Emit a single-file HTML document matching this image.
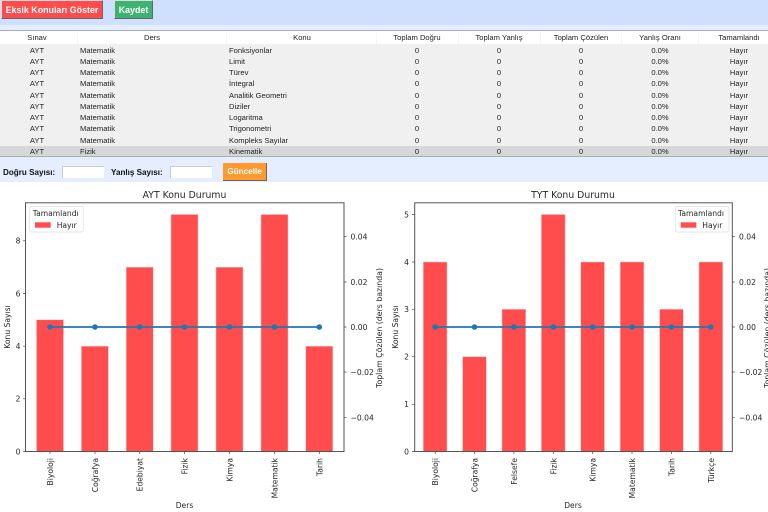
<!DOCTYPE html>
<html lang="tr"><head><meta charset="utf-8"><title>Konu Durumu</title>
<style>
html,body{margin:0;padding:0;width:768px;height:512px;overflow:hidden;background:#fff}
body{position:relative;font-family:"Liberation Sans",sans-serif}
.abs{position:absolute}
.btn{position:absolute;box-sizing:border-box;color:#fff;font-weight:bold;font-size:8.9px;text-align:center;border-right:1.5px solid #666;border-bottom:1.5px solid #666;border-top:1px solid #ddd;border-left:1px solid #ddd}
.th,.td{position:absolute;font-size:7.6px;color:#222;white-space:nowrap;line-height:11px}
.c{text-align:center;transform:translateX(-50%)}
.lbl{position:absolute;font-weight:bold;font-size:8.1px;color:#111;line-height:11px}
.inp{position:absolute;background:#fff;box-sizing:border-box;border-top:1px solid #ccc;border-left:1px solid #ccc;height:12px;top:166px;width:42px}
svg{position:absolute;left:0;top:0;filter:blur(.25px)}
svg text{font-family:"DejaVu Sans",sans-serif;fill:#262626}
</style></head><body>
<div class="abs" style="left:0;top:0;width:768px;height:25px;background:#cfe0ff"></div>
<div class="abs" style="left:0;top:25px;width:768px;height:5px;background:#e4eeff"></div>
<div class="btn" style="left:1px;top:0;width:102px;height:19px;background:#ff4d4d;line-height:18px;">Eksik Konuları Göster</div>
<div class="btn" style="left:114px;top:0;width:39px;height:19px;background:#3cb371;line-height:18px;">Kaydet</div>

<div class="abs" style="left:0;top:30px;width:768px;height:1px;background:#a9adb5"></div>
<div class="abs" style="left:0;top:31px;width:768px;height:13px;background:#fff"></div>
<div class="abs" style="left:77px;top:31px;width:1px;height:13px;background:#f5f5f5"></div>
<div class="abs" style="left:226px;top:31px;width:1px;height:13px;background:#f5f5f5"></div>
<div class="abs" style="left:376px;top:31px;width:1px;height:13px;background:#f5f5f5"></div>
<div class="abs" style="left:458px;top:31px;width:1px;height:13px;background:#f5f5f5"></div>
<div class="abs" style="left:540px;top:31px;width:1px;height:13px;background:#f5f5f5"></div>
<div class="abs" style="left:621px;top:31px;width:1px;height:13px;background:#f5f5f5"></div>
<div class="abs" style="left:698px;top:31px;width:1px;height:13px;background:#f5f5f5"></div>
<div class="abs" style="left:0;top:44px;width:768px;height:101.5px;background:#f0f0f0"></div>
<div class="abs" style="left:0;top:145.5px;width:768px;height:11px;background:#d7d7d7"></div>
<div class="abs" style="left:0;top:156px;width:768px;height:1px;background:#a9adb5"></div>
<div class="abs" style="left:0;top:157px;width:768px;height:25px;background:#e4eeff"></div>

<div class="th c" style="left:37px;top:32px">Sınav</div>
<div class="th c" style="left:152px;top:32px">Ders</div>
<div class="th c" style="left:302px;top:32px">Konu</div>
<div class="th c" style="left:417px;top:32px">Toplam Doğru</div>
<div class="th c" style="left:499px;top:32px">Toplam Yanlış</div>
<div class="th c" style="left:581px;top:32px">Toplam Çözülen</div>
<div class="th c" style="left:660px;top:32px">Yanlış Oranı</div>
<div class="th c" style="left:739px;top:32px">Tamamlandı</div>

<div class="td c" style="left:37px;top:45px">AYT</div><div class="td" style="left:80px;top:45px">Matematik</div><div class="td" style="left:229px;top:45px">Fonksiyonlar</div><div class="td c" style="left:417px;top:45px">0</div><div class="td c" style="left:499px;top:45px">0</div><div class="td c" style="left:581px;top:45px">0</div><div class="td c" style="left:660px;top:45px">0.0%</div><div class="td c" style="left:739px;top:45px">Hayır</div>
<div class="td c" style="left:37px;top:56px">AYT</div><div class="td" style="left:80px;top:56px">Matematik</div><div class="td" style="left:229px;top:56px">Limit</div><div class="td c" style="left:417px;top:56px">0</div><div class="td c" style="left:499px;top:56px">0</div><div class="td c" style="left:581px;top:56px">0</div><div class="td c" style="left:660px;top:56px">0.0%</div><div class="td c" style="left:739px;top:56px">Hayır</div>
<div class="td c" style="left:37px;top:67px">AYT</div><div class="td" style="left:80px;top:67px">Matematik</div><div class="td" style="left:229px;top:67px">Türev</div><div class="td c" style="left:417px;top:67px">0</div><div class="td c" style="left:499px;top:67px">0</div><div class="td c" style="left:581px;top:67px">0</div><div class="td c" style="left:660px;top:67px">0.0%</div><div class="td c" style="left:739px;top:67px">Hayır</div>
<div class="td c" style="left:37px;top:78px">AYT</div><div class="td" style="left:80px;top:78px">Matematik</div><div class="td" style="left:229px;top:78px">İntegral</div><div class="td c" style="left:417px;top:78px">0</div><div class="td c" style="left:499px;top:78px">0</div><div class="td c" style="left:581px;top:78px">0</div><div class="td c" style="left:660px;top:78px">0.0%</div><div class="td c" style="left:739px;top:78px">Hayır</div>
<div class="td c" style="left:37px;top:89.5px">AYT</div><div class="td" style="left:80px;top:89.5px">Matematik</div><div class="td" style="left:229px;top:89.5px">Analitik Geometri</div><div class="td c" style="left:417px;top:89.5px">0</div><div class="td c" style="left:499px;top:89.5px">0</div><div class="td c" style="left:581px;top:89.5px">0</div><div class="td c" style="left:660px;top:89.5px">0.0%</div><div class="td c" style="left:739px;top:89.5px">Hayır</div>
<div class="td c" style="left:37px;top:100.5px">AYT</div><div class="td" style="left:80px;top:100.5px">Matematik</div><div class="td" style="left:229px;top:100.5px">Diziler</div><div class="td c" style="left:417px;top:100.5px">0</div><div class="td c" style="left:499px;top:100.5px">0</div><div class="td c" style="left:581px;top:100.5px">0</div><div class="td c" style="left:660px;top:100.5px">0.0%</div><div class="td c" style="left:739px;top:100.5px">Hayır</div>
<div class="td c" style="left:37px;top:112px">AYT</div><div class="td" style="left:80px;top:112px">Matematik</div><div class="td" style="left:229px;top:112px">Logaritma</div><div class="td c" style="left:417px;top:112px">0</div><div class="td c" style="left:499px;top:112px">0</div><div class="td c" style="left:581px;top:112px">0</div><div class="td c" style="left:660px;top:112px">0.0%</div><div class="td c" style="left:739px;top:112px">Hayır</div>
<div class="td c" style="left:37px;top:123px">AYT</div><div class="td" style="left:80px;top:123px">Matematik</div><div class="td" style="left:229px;top:123px">Trigonometri</div><div class="td c" style="left:417px;top:123px">0</div><div class="td c" style="left:499px;top:123px">0</div><div class="td c" style="left:581px;top:123px">0</div><div class="td c" style="left:660px;top:123px">0.0%</div><div class="td c" style="left:739px;top:123px">Hayır</div>
<div class="td c" style="left:37px;top:134.5px">AYT</div><div class="td" style="left:80px;top:134.5px">Matematik</div><div class="td" style="left:229px;top:134.5px">Kompleks Sayılar</div><div class="td c" style="left:417px;top:134.5px">0</div><div class="td c" style="left:499px;top:134.5px">0</div><div class="td c" style="left:581px;top:134.5px">0</div><div class="td c" style="left:660px;top:134.5px">0.0%</div><div class="td c" style="left:739px;top:134.5px">Hayır</div>
<div class="td c" style="left:37px;top:145.5px">AYT</div><div class="td" style="left:80px;top:145.5px">Fizik</div><div class="td" style="left:229px;top:145.5px">Kinematik</div><div class="td c" style="left:417px;top:145.5px">0</div><div class="td c" style="left:499px;top:145.5px">0</div><div class="td c" style="left:581px;top:145.5px">0</div><div class="td c" style="left:660px;top:145.5px">0.0%</div><div class="td c" style="left:739px;top:145.5px">Hayır</div>

<div class="lbl" style="left:3px;top:167px">Doğru Sayısı:</div>
<div class="inp" style="left:62px"></div>
<div class="lbl" style="left:111px;top:167px">Yanlış Sayısı:</div>
<div class="inp" style="left:170px"></div>
<div class="btn" style="left:223px;top:163px;width:44px;height:18px;background:#ff9a2e;line-height:17px;font-size:8.2px;border-top:0;border-left:0">Güncelle</div>

<svg width="768" height="512" viewBox="0 0 768 512">
<!-- LEFT CHART -->
<text x="184.5" y="198" font-size="9.3" text-anchor="middle">AYT Konu Durumu</text>
<g fill="#ff4d4d" stroke="#ffc4c4" stroke-width=".5">
<rect x="36.5" y="319.8" width="27" height="131.7"/>
<rect x="81.4" y="346.2" width="27" height="105.3"/>
<rect x="126.2" y="267.2" width="27" height="184.3"/>
<rect x="171" y="214.5" width="27" height="237"/>
<rect x="216" y="267.2" width="27" height="184.3"/>
<rect x="261" y="214.5" width="27" height="237"/>
<rect x="305.8" y="346.2" width="27" height="105.3"/>
</g>
<rect x="25.5" y="202.8" width="318.5" height="248.7" fill="none" stroke="#555" stroke-width="1"/>
<path d="M50 327H319.5" stroke="#1f77b4" stroke-width="1.7" fill="none"/>
<g fill="#1f77b4"><circle cx="50" cy="327" r="2.8"/><circle cx="95" cy="327" r="2.8"/><circle cx="139.7" cy="327" r="2.8"/><circle cx="184.5" cy="327" r="2.8"/><circle cx="229.5" cy="327" r="2.8"/><circle cx="274.5" cy="327" r="2.8"/><circle cx="319.3" cy="327" r="2.8"/></g>
<path d="M23 451.5h2.5M23 398.8h2.5M23 346.2h2.5M23 293.5h2.5M23 240.8h2.5M344 236.5h2.5M344 282h2.5M344 327h2.5M344 372h2.5M344 417.7h2.5M50 451.5v2.5M95 451.5v2.5M139.7 451.5v2.5M184.5 451.5v2.5M229.5 451.5v2.5M274.5 451.5v2.5M319.3 451.5v2.5" stroke="#444" stroke-width=".7"/>
<g font-size="7.6" text-anchor="end"><text x="20.5" y="454.3">0</text><text x="20.5" y="401.6">2</text><text x="20.5" y="349">4</text><text x="20.5" y="296.3">6</text><text x="20.5" y="243.6">8</text></g>
<g font-size="7.6"><text x="350.5" y="239.3">0.04</text><text x="350.5" y="284.8">0.02</text><text x="350.5" y="329.8">0.00</text><text x="350.5" y="374.8">−0.02</text><text x="350.5" y="420.5">−0.04</text></g>
<text transform="translate(10,327) rotate(-90)" font-size="7.6" text-anchor="middle">Konu Sayısı</text>
<text transform="translate(382,328) rotate(-90)" font-size="7.6" text-anchor="middle" textLength="120" lengthAdjust="spacingAndGlyphs">Toplam Çözülen (ders bazında)</text>
<text x="184.5" y="508" font-size="7.6" text-anchor="middle">Ders</text>
<g font-size="7.6" text-anchor="end">
<text transform="translate(53,458) rotate(-90)">Biyoloji</text>
<text transform="translate(98,458) rotate(-90)">Coğrafya</text>
<text transform="translate(142.7,458) rotate(-90)">Edebiyat</text>
<text transform="translate(187.5,458) rotate(-90)">Fizik</text>
<text transform="translate(232.5,458) rotate(-90)">Kimya</text>
<text transform="translate(277.5,458) rotate(-90)">Matematik</text>
<text transform="translate(322.3,458) rotate(-90)">Tarih</text>
</g>
<rect x="29.5" y="206.5" width="53.8" height="25.5" rx="2" fill="#fff" fill-opacity=".9" stroke="#ddd" stroke-width=".7"/>
<text x="32.7" y="216" font-size="7.6">Tamamlandı</text>
<rect x="35" y="222.3" width="15.7" height="5.4" fill="#ff4d4d"/>
<text x="56.7" y="228" font-size="7.6">Hayır</text>

<!-- RIGHT CHART -->
<text x="573" y="198" font-size="9.3" text-anchor="middle">TYT Konu Durumu</text>
<g fill="#ff4d4d" stroke="#ffc4c4" stroke-width=".5">
<rect x="423.3" y="262" width="23.7" height="189.5"/>
<rect x="462.6" y="356.7" width="23.7" height="94.8"/>
<rect x="502" y="309.3" width="23.7" height="142.2"/>
<rect x="541.4" y="214.5" width="23.7" height="237"/>
<rect x="580.8" y="262" width="23.7" height="189.5"/>
<rect x="620.2" y="262" width="23.7" height="189.5"/>
<rect x="659.6" y="309.3" width="23.7" height="142.2"/>
<rect x="699" y="262" width="23.7" height="189.5"/>
</g>
<rect x="414.7" y="202.8" width="317.6" height="248.7" fill="none" stroke="#555" stroke-width="1"/>
<path d="M435.2 327H711" stroke="#1f77b4" stroke-width="1.7" fill="none"/>
<g fill="#1f77b4"><circle cx="435.2" cy="327" r="2.8"/><circle cx="474.5" cy="327" r="2.8"/><circle cx="513.9" cy="327" r="2.8"/><circle cx="553.3" cy="327" r="2.8"/><circle cx="592.7" cy="327" r="2.8"/><circle cx="632" cy="327" r="2.8"/><circle cx="671.4" cy="327" r="2.8"/><circle cx="710.8" cy="327" r="2.8"/></g>
<path d="M412 451.5h2.7M412 404.3h2.7M412 356.7h2.7M412 309.3h2.7M412 262h2.7M412 214.5h2.7M732.3 236.5h2.5M732.3 282h2.5M732.3 327h2.5M732.3 372h2.5M732.3 417.7h2.5M435.2 451.5v2.5M474.5 451.5v2.5M513.9 451.5v2.5M553.3 451.5v2.5M592.7 451.5v2.5M632 451.5v2.5M671.4 451.5v2.5M710.8 451.5v2.5" stroke="#444" stroke-width=".7"/>
<g font-size="7.6" text-anchor="end"><text x="409" y="454.3">0</text><text x="409" y="407.1">1</text><text x="409" y="359.5">2</text><text x="409" y="312.1">3</text><text x="409" y="264.8">4</text><text x="409" y="217.3">5</text></g>
<g font-size="7.6"><text x="739" y="239.3">0.04</text><text x="739" y="284.8">0.02</text><text x="739" y="329.8">0.00</text><text x="739" y="374.8">−0.02</text><text x="739" y="420.5">−0.04</text></g>
<text transform="translate(398,327) rotate(-90)" font-size="7.6" text-anchor="middle">Konu Sayısı</text>
<text transform="translate(770,328) rotate(-90)" font-size="7.6" text-anchor="middle" textLength="120" lengthAdjust="spacingAndGlyphs">Toplam Çözülen (ders bazında)</text>
<text x="573" y="508" font-size="7.6" text-anchor="middle">Ders</text>
<g font-size="7.6" text-anchor="end">
<text transform="translate(438.2,458) rotate(-90)">Biyoloji</text>
<text transform="translate(477.5,458) rotate(-90)">Coğrafya</text>
<text transform="translate(516.9,458) rotate(-90)">Felsefe</text>
<text transform="translate(556.3,458) rotate(-90)">Fizik</text>
<text transform="translate(595.7,458) rotate(-90)">Kimya</text>
<text transform="translate(635,458) rotate(-90)">Matematik</text>
<text transform="translate(674.4,458) rotate(-90)">Tarih</text>
<text transform="translate(713.8,458) rotate(-90)">Türkçe</text>
</g>
<rect x="675.3" y="206.5" width="53.7" height="25.5" rx="2" fill="#fff" fill-opacity=".9" stroke="#ddd" stroke-width=".7"/>
<text x="678" y="216" font-size="7.6">Tamamlandı</text>
<rect x="680.7" y="222.3" width="15.6" height="5.4" fill="#ff4d4d"/>
<text x="702.3" y="228" font-size="7.6">Hayır</text>
</svg>
</body></html>
